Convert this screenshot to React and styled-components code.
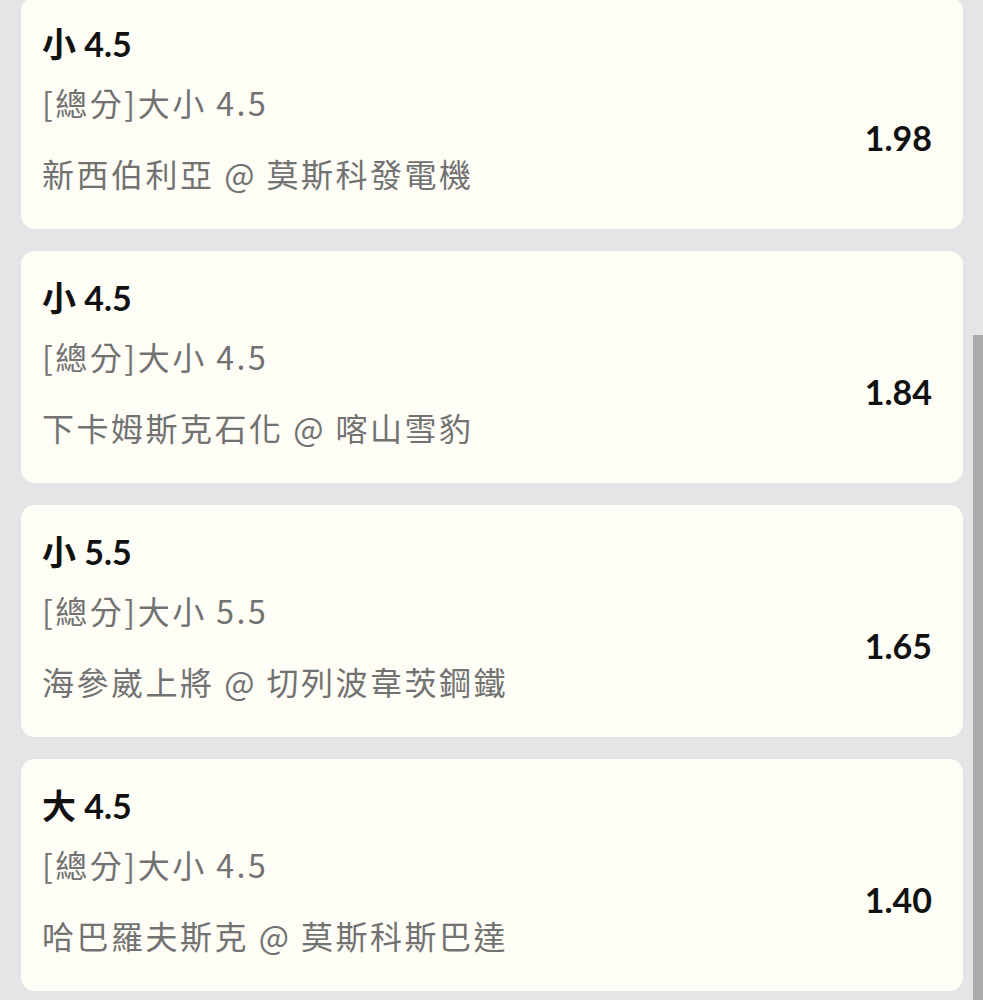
import React from 'react';
import styled, { createGlobalStyle } from 'styled-components';

const bets = [
  { pick: '小 4.5', market: '[總分]大小 4.5', match: '新西伯利亞 @ 莫斯科發電機', odds: '1.98' },
  { pick: '小 4.5', market: '[總分]大小 4.5', match: '下卡姆斯克石化 @ 喀山雪豹', odds: '1.84' },
  { pick: '小 5.5', market: '[總分]大小 5.5', match: '海參崴上將 @ 切列波韋茨鋼鐵', odds: '1.65' },
  { pick: '大 4.5', market: '[總分]大小 4.5', match: '哈巴羅夫斯克 @ 莫斯科斯巴達', odds: '1.40' },
];

const GlobalStyle = createGlobalStyle`
  html, body {
    margin: 0;
    padding: 0;
    background: #e4e5e7;
    overflow: hidden;
  }
  body {
    font-family: Lato, "Noto Sans CJK TC", sans-serif;
  }
`;

const List = styled.div`
  display: flex;
  flex-direction: column;
  gap: 22px;
  margin-top: -3px;
  padding: 0 20px 20px 21px;
`;

const Card = styled.div`
  background: #fffef6;
  border-radius: 14px;
  padding: 23px 31px 29px 21px;
  box-sizing: border-box;
  height: 232px;
`;

const Pick = styled.div`
  font-family: Lato, "Noto Sans CJK TC", sans-serif;
  font-weight: 700;
  font-size: 34px;
  line-height: 48px;
  color: #111;
  margin-bottom: 10px;
`;

const Body = styled.div`
  display: flex;
  align-items: center;
  justify-content: space-between;
`;

const Info = styled.div`
  display: flex;
  flex-direction: column;
  gap: 23px;
`;

const Line = styled.div`
  font-family: "Noto Sans CJK TC", sans-serif;
  font-weight: 400;
  font-size: 32px;
  letter-spacing: 2.5px;
  line-height: 48px;
  color: #727272;
  white-space: nowrap;
`;

const Odds = styled.div`
  font-family: Lato, sans-serif;
  font-weight: 700;
  font-size: 34px;
  color: #111;
`;

const Thumb = styled.div`
  position: fixed;
  right: 0;
  top: 335px;
  bottom: 0;
  width: 10px;
  background: #ababab;
`;

export default function App() {
  return (
    <>
      <GlobalStyle />
      <List>
        {bets.map((b, i) => (
          <Card key={i}>
            <Pick>{b.pick}</Pick>
            <Body>
              <Info>
                <Line>{b.market}</Line>
                <Line>{b.match}</Line>
              </Info>
              <Odds>{b.odds}</Odds>
            </Body>
          </Card>
        ))}
      </List>
      <Thumb />
    </>
  );
}
